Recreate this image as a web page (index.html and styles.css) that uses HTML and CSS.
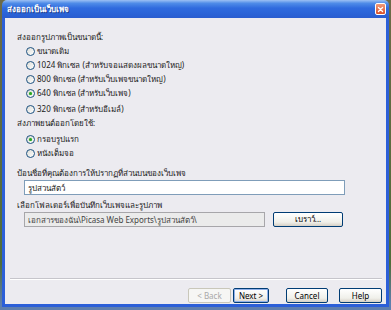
FILE: index.html
```html
<!DOCTYPE html>
<html lang="th">
<head>
    <meta charset="UTF-8">
    <title>ส่งออกเป็นเว็บเพจ</title>
    <link rel="stylesheet" href="styles.css">
</head>
<body>
    <div class="window">
        <div class="titlebar">
            <span class="title">ส่งออกเป็นเว็บเพจ</span>
            <span class="close">
                <svg width="11" height="11" viewBox="0 0 11 11">
                    <path d="M3 3 L8 8 M8 3 L3 8" stroke="#fff" stroke-width="1.6" stroke-linecap="round"/>
                </svg>
            </span>
        </div>

        <div class="content">
            <p class="label">ส่งออกรูปภาพเป็นขนาดนี้:</p>
            <ul class="options">
                <li><span class="radio"></span>ขนาดเดิม</li>
                <li><span class="radio"></span>1024 พิกเซล (สำหรับจอแสดงผลขนาดใหญ่)</li>
                <li><span class="radio"></span>800 พิกเซล (สำหรับเว็บเพจขนาดใหญ่)</li>
                <li><span class="radio checked"></span>640 พิกเซล (สำหรับเว็บเพจ)</li>
                <li class="spaced"><span class="radio"></span>320 พิกเซล (สำหรับอีเมล์)</li>
            </ul>

            <p class="label">ส่งภาพยนต์ออกโดยใช้:</p>
            <ul class="options movie">
                <li><span class="radio checked"></span>กรอบรูปแรก</li>
                <li><span class="radio"></span>หนังเต็มจอ</li>
            </ul>

            <p class="label title-label">ป้อนชื่อที่คุณต้องการให้ปรากฏที่ส่วนบนของเว็บเพจ</p>
            <div class="field name-field">รูปสวนสัตว์</div>

            <p class="label folder-label">เลือกโฟลเดอร์เพื่อบันทึกเว็บเพจและรูปภาพ</p>
            <div class="folder-row">
                <div class="field path-field">เอกสารของฉัน\Picasa Web Exports\รูปสวนสัตว์\</div>
                <button class="btn browse">เบราว์...</button>
            </div>

            <div class="footer">
                <div class="separator"></div>
                <div class="buttons">
                    <button class="btn back" disabled>&lt; Back</button>
                    <button class="btn next">Next &gt;</button>
                    <button class="btn cancel">Cancel</button>
                    <button class="btn help">Help</button>
                </div>
            </div>
        </div>
    </div>
</body>
</html>
```

FILE: styles.css
```css
:root {
    --xp-blue: #2c5fd8;
    --face: #ecebf0;
    --text: #1a1a1a;
    --field-border: #7f9db9;
}

* {
    margin: 0;
    padding: 0;
    box-sizing: border-box;
}

body {
    width: 391px;
    height: 310px;
    overflow: hidden;
    padding-left: 2px;
    font-family: Tahoma, "Noto Sans", "DejaVu Sans", sans-serif;
    font-size: 8px;
    color: var(--text);
    background: linear-gradient(#6c6a48, #4f6d3a 85%, #5f7fae 98%);
}

.window {
    width: 387px;
    height: 307px;
    display: flex;
    flex-direction: column;
}

.titlebar {
    height: 18px;
    display: flex;
    align-items: center;
    justify-content: space-between;
    padding: 0 3px 0 5px;
    border-radius: 5px 5px 0 0;
    background: linear-gradient(#9cc0f4 0%, #4f8ce8 18%, #2f6ade 45%, #2a62d6 80%, #2a5ccf 100%);
}

.title {
    color: #fff;
    font-weight: bold;
    font-size: 8px;
    text-shadow: 1px 1px 0 #1a3c8c;
}

.close {
    width: 11px;
    height: 12px;
    display: flex;
    align-items: center;
    justify-content: center;
    border: 1px solid #fff;
    border-radius: 2px;
    background: linear-gradient(#f09a7a, #d9502a);
}

.content {
    flex: 1;
    display: flex;
    flex-direction: column;
    padding: 12px 4px 0 12px;
    background-color: var(--face);
    border: solid var(--xp-blue);
    border-width: 0 3px 3px 3px;
}

.label {
    height: 14px;
    line-height: 14px;
}

.options {
    list-style: none;
    padding-left: 9px;
}

.options li {
    height: 14px;
    display: flex;
    align-items: center;
    gap: 2px;
}

.options li.spaced {
    margin-top: 2px;
}

.options.movie {
    margin-top: 2px;
}

.radio {
    width: 9px;
    height: 9px;
    border-radius: 50%;
    border: 1px solid #1c5180;
    background: linear-gradient(135deg, #dcdcd6, #fff);
    display: flex;
    align-items: center;
    justify-content: center;
}

.radio.checked::after {
    content: "";
    width: 3px;
    height: 3px;
    border-radius: 50%;
    background-color: #2aa521;
    box-shadow: 0 0 1px #4fd246;
}

.title-label {
    margin-top: 6px;
}

.field {
    height: 15px;
    line-height: 13px;
    padding-left: 3px;
    border: 1px solid var(--field-border);
    background-color: #fff;
}

.name-field {
    margin-left: 7px;
    width: 321px;
}

.folder-label {
    margin-top: 3px;
}

.folder-row {
    display: flex;
    gap: 8px;
    margin-left: 7px;
}

.path-field {
    width: 241px;
    border-color: #a7a6aa;
    background-color: #ebebeb;
    color: #444;
}

.btn {
    height: 15px;
    font-family: inherit;
    font-size: 8px;
    color: #000;
    border: 1px solid #003c74;
    border-radius: 2px;
    background: linear-gradient(#ffffff, #f0f0ea 70%, #d6d0c5);
}

.browse {
    width: 70px;
}

.footer {
    margin-top: auto;
    margin-left: -7px;
    padding-bottom: 1px;
}

.separator {
    border-top: 1px solid #c6c5cb;
    border-bottom: 1px solid #fff;
}

.buttons {
    display: flex;
    justify-content: flex-end;
    margin-top: 8px;
    padding-right: 0;
}

.back {
    width: 43px;
    color: #a8a8a8;
    border-color: #c9c7ba;
    background: #f6f6f4;
}

.next {
    width: 36px;
    margin-left: 2px;
    box-shadow: inset 0 0 0 1px #8fb0ea;
}

.cancel {
    width: 42px;
    margin-left: 17px;
}

.help {
    width: 43px;
    margin-left: 11px;
}
```
